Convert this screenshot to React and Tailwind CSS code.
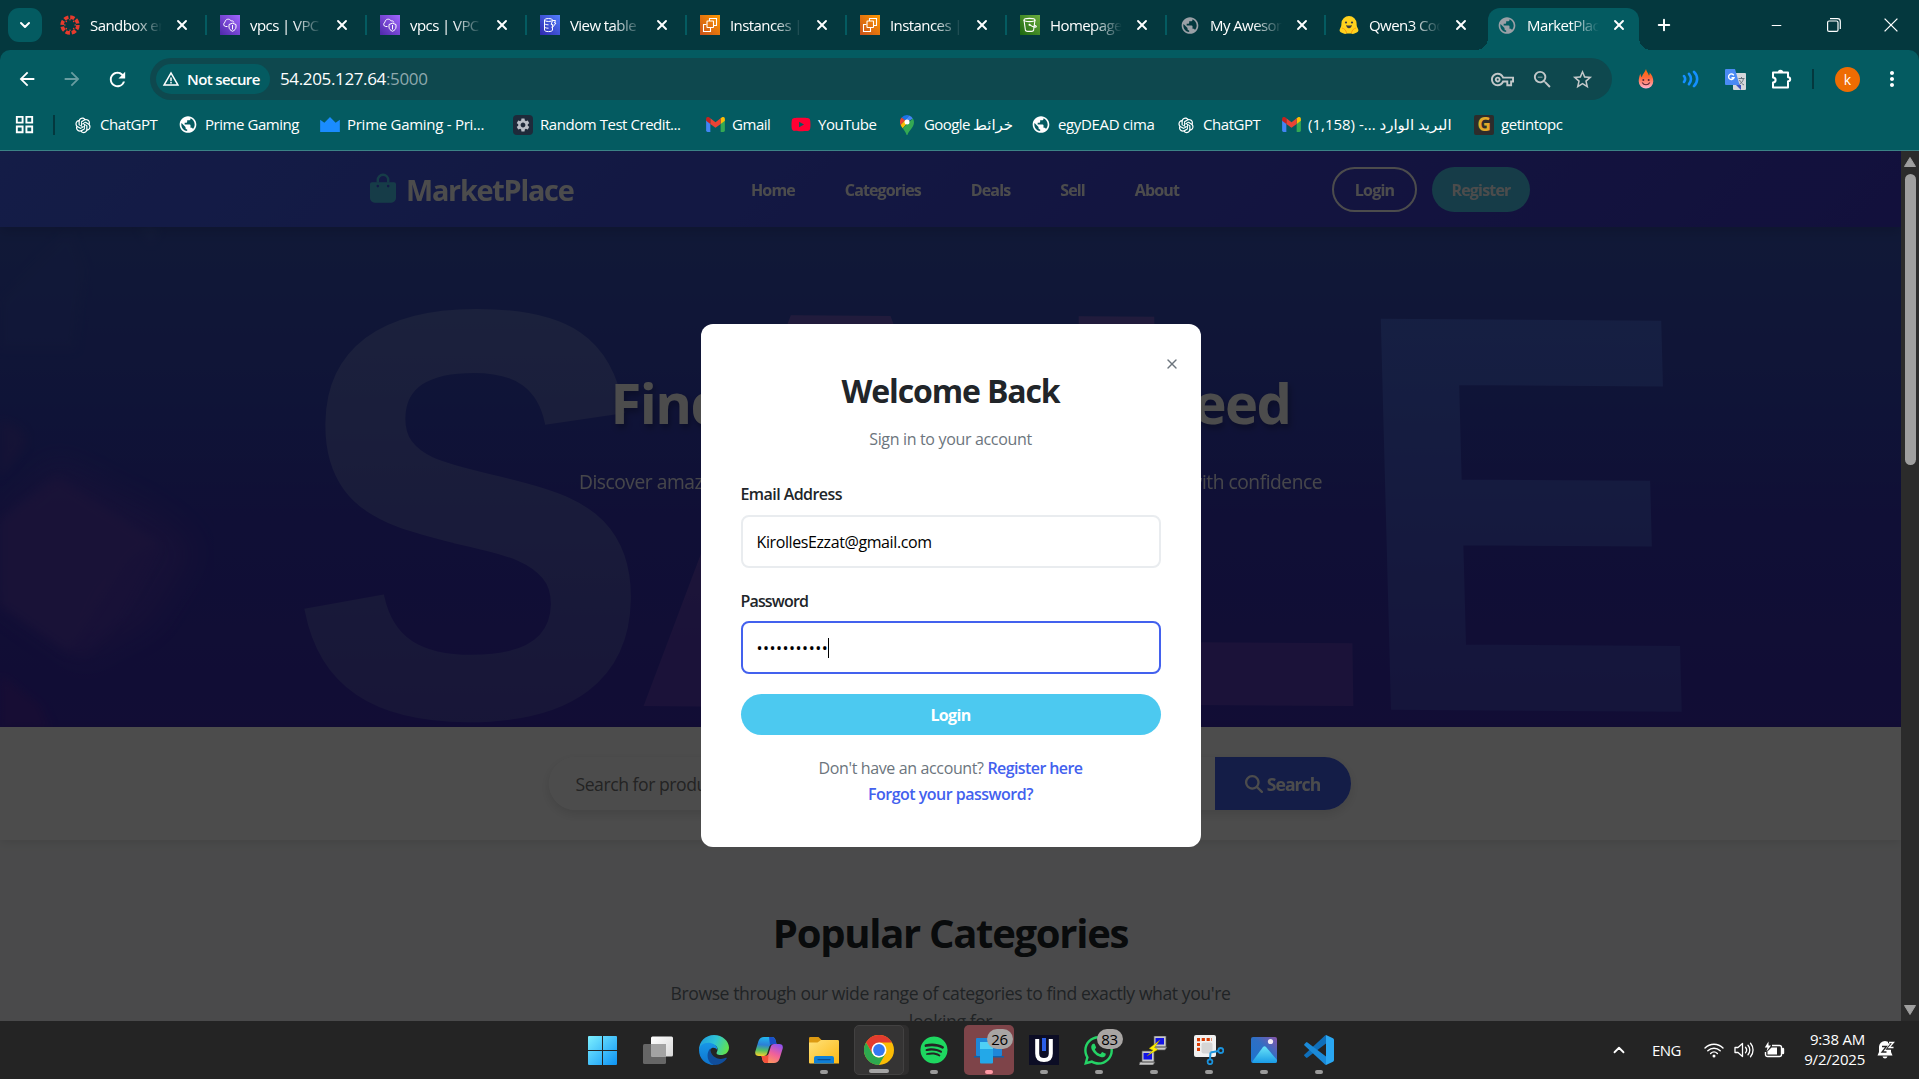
import { X, Plus, ChevronDown, ChevronUp, Minus } from "lucide-react";
import {
  MdPublic, MdArrowBack, MdArrowForward, MdRefresh, MdWarningAmber, MdOutlineVpnKey,
  MdZoomOut, MdStarBorder, MdMoreVert, MdOutlineGridView, MdSettings,
} from "react-icons/md";
import { FaSpotify, FaWhatsapp, FaYoutube } from "react-icons/fa";
import { FaMagnifyingGlass } from "react-icons/fa6";
import { AiOutlineOpenAI } from "react-icons/ai";

/* ---------- favicons ---------- */

function CanvasIcon() {
  return (
    <svg viewBox="0 0 20 20" className="size-5">
      <circle cx="10" cy="10" r="7.9" fill="none" stroke="#e83b2d" strokeWidth="3.6" strokeDasharray="4.4 1.8" />
      {[0, 45, 90, 135, 180, 225, 270, 315].map((a) => (
        <circle key={a} cx="10" cy="4.8" r="0.8" fill="#e83b2d" transform={`rotate(${a} 10 10)`} />
      ))}
    </svg>
  );
}

function VpcIcon() {
  return (
    <svg viewBox="0 0 20 20" className="size-5">
      <defs>
        <linearGradient id="vpc" x1="0" y1="1" x2="1" y2="0">
          <stop offset="0" stopColor="#4d27a8" />
          <stop offset="1" stopColor="#a166ff" />
        </linearGradient>
      </defs>
      <rect width="20" height="20" fill="url(#vpc)" />
      <path d="M7.500 11.500H5.800A2.200 2.200 0 0 1 5 7.300C5 4 9.500 3 11.300 6c1.300-.5 2.400.3 2.500 1.500" fill="none" stroke="#fff" strokeWidth="1" />
      <path d="M9 9.500l3.500-1.300L16 9.500v2.500c0 2-1.500 3.400-3.500 4.300C10.500 15.400 9 14 9 12z M12.500 10v4.500" fill="none" stroke="#fff" strokeWidth="1" />
    </svg>
  );
}

function DynamoIcon() {
  return (
    <svg viewBox="0 0 20 20" className="size-5">
      <defs>
        <linearGradient id="ddb" x1="0" y1="1" x2="1" y2="0">
          <stop offset="0" stopColor="#2e27ad" />
          <stop offset="1" stopColor="#527fff" />
        </linearGradient>
      </defs>
      <rect width="20" height="20" fill="url(#ddb)" />
      <g fill="none" stroke="#fff" strokeWidth="1">
        <ellipse cx="8.500" cy="5" rx="4" ry="1.500" />
        <path d="M4.500 5v10c0 1 1.800 1.600 4 1.600s4-.6 4-1.600v-2M4.500 8.300c0 1 1.800 1.500 4 1.500M4.500 11.700c0 1 1.800 1.500 4 1.500" />
        <path d="M12.500 5.500h3l-1 2.500h1.500l-4 5 .8-3.500h-1.600z" />
      </g>
    </svg>
  );
}

function Ec2Icon() {
  return (
    <svg viewBox="0 0 20 20" className="size-5">
      <defs>
        <linearGradient id="ec2" x1="0" y1="1" x2="1" y2="0">
          <stop offset="0" stopColor="#c8511b" />
          <stop offset="1" stopColor="#ff9900" />
        </linearGradient>
      </defs>
      <rect width="20" height="20" fill="url(#ec2)" />
      <g fill="none" stroke="#fff" strokeWidth="1.100">
        <rect x="7" y="6" width="6.500" height="6.500" rx="0.500" />
        <path d="M9.500 6V3.500H16.500V10.500H13.500" />
        <path d="M6.500 9.500H3.500V16.500H10.500V13" />
      </g>
    </svg>
  );
}

function S3Icon() {
  return (
    <svg viewBox="0 0 20 20" className="size-5">
      <defs>
        <linearGradient id="s3" x1="0" y1="1" x2="1" y2="0">
          <stop offset="0" stopColor="#1b660f" />
          <stop offset="1" stopColor="#6cae3e" />
        </linearGradient>
      </defs>
      <rect width="20" height="20" fill="url(#s3)" />
      <g fill="none" stroke="#fff" strokeWidth="1.100">
        <ellipse cx="9.500" cy="5" rx="5.500" ry="1.600" />
        <path d="M4 5l1.400 10.200c.6 1.600 7.600 1.600 8.200 0L15 5" />
        <path d="M9.500 9.800c2 1.400 5 2.600 6.500 2.200 1-.6-.6-1.600-2-2" />
      </g>
      <circle cx="9.500" cy="9.800" r="1" fill="#fff" />
    </svg>
  );
}

function HuggingIcon() {
  return (
    <svg viewBox="0 0 20 20" className="size-5">
      <path d="M10 1a7.600 7.600 0 0 1 7.600 7.600c0 2 .2 3.400 1.600 5.600.8 1.600-.6 3-2 3.600-2 1.200-3.800 1.400-5 .6h-4.400c-1.200.8-3 .6-5-.6-1.400-.6-2.800-2-2-3.600 1.400-2.200 1.600-3.600 1.600-5.600A7.600 7.600 0 0 1 10 1z" fill="#ffd21e" />
      <path d="M3 13c2 .4 4 2 4.600 5M17 13c-2 .4-4 2-4.600 5" stroke="#ff9d0b" strokeWidth="1" fill="none" />
      <circle cx="7" cy="7.500" r="1.100" fill="#3a3b45" />
      <circle cx="13" cy="7.500" r="1.100" fill="#3a3b45" />
      <path d="M7.200 10c1.400.8 4.200.8 5.600 0 0 2-1.200 3.200-2.800 3.200S7.200 12 7.200 10z" fill="#3a3b45" />
    </svg>
  );
}

function GmailIcon() {
  return (
    <svg viewBox="0 0 20 16" className="h-[15px] w-[19px]">
      <path d="M0 2.500V14.500A1.500 1.500 0 0 0 1.500 16H4.500V7z" fill="#4285f4" />
      <path d="M20 2.500V14.500A1.500 1.500 0 0 1 18.500 16H15.500V7z" fill="#34a853" />
      <path d="M15.500 1.500V7.500L20 4V2c0-2-2.200-2.600-3.500-1.500z" fill="#fbbc04" />
      <path d="M4.500 7.500V1.300L10 5.500l5.500-4.200V7.500L10 11.500z" fill="#ea4335" />
      <path d="M0 2v2l4.500 3.500V1.300L3.500.5C2.200-.6 0 0 0 2z" fill="#c5221f" />
    </svg>
  );
}

function MapsIcon() {
  return (
    <svg viewBox="0 0 14 20" className="h-[20px] w-[14px]">
      <path d="M7 0a7 7 0 0 0-5.400 2.500L5 5.400 9.200.4A7 7 0 0 0 7 0z" fill="#1a73e8" />
      <path d="M9.200.4L4.900 5.500 7 7l5.900-3.600A7 7 0 0 0 9.200.4z" fill="#4285f4" />
      <path d="M1.600 2.500A7 7 0 0 0 .6 10l4.500-4.700z" fill="#ea4335" />
      <path d="M.6 10c.5 1.200 1.300 2.200 2.100 3.300L9.600 5.500 5 5.300z" fill="#fbbc04" />
      <path d="M12.900 3.400L2.700 13.300C4.200 15.500 5.500 17 6.400 19.400c.2.800 1 .8 1.200 0C9 15.500 14 12.500 14 7a7 7 0 0 0-1.100-3.600z" fill="#34a853" />
      <circle cx="7" cy="7" r="2.500" fill="#fff" />
    </svg>
  );
}

function CrownIcon() {
  return (
    <svg viewBox="0 0 21 16" className="h-[15px] w-[21px]">
      <path d="M0 3l4.500 3L10.500 0l6 6L21 3v13H0z" fill="#1a8cff" />
    </svg>
  );
}

function RandomIcon() {
  return (
    <span className="flex size-5 items-center justify-center rounded bg-[#1e2a3a]">
      <MdSettings className="size-4 text-[#b9bec6]" />
    </span>
  );
}

function GetIntoPcIcon() {
  return (
    <span className="flex size-5 items-center justify-center rounded-[2px] bg-[#2d2c2b] text-[19px] leading-none font-bold text-[#e2a92a]">
      G
    </span>
  );
}

/* ---------- browser frame ---------- */

const globe = <MdPublic className="size-[21px] text-[#9aa0a6]" />;

const tabs = [
  { icon: <CanvasIcon />, title: "Sandbox en", w: "w-[160px]" },
  { icon: <VpcIcon />, title: "vpcs | VPC", w: "w-[160px]" },
  { icon: <VpcIcon />, title: "vpcs | VPC", w: "w-[160px]" },
  { icon: <DynamoIcon />, title: "View table", w: "w-[160px]" },
  { icon: <Ec2Icon />, title: "Instances |", w: "w-[160px]" },
  { icon: <Ec2Icon />, title: "Instances |", w: "w-[160px]" },
  { icon: <S3Icon />, title: "Homepage", w: "w-[160px]" },
  { icon: globe, title: "My Awesom", w: "w-[159px]" },
];

function TabBody({ icon, title }) {
  return (
    <>
      <span className="flex size-5 shrink-0 items-center justify-center">{icon}</span>
      <span className="ml-[10px] w-[72px] shrink-0 overflow-hidden text-[15px] tracking-[-0.038em] whitespace-nowrap text-white mask-r-from-60%">
        {title}
      </span>
      <X className="ml-[12px] size-4 shrink-0 text-white" strokeWidth={2.8} />
    </>
  );
}

function TabStrip() {
  return (
    <div className="flex h-[50px] items-stretch">
      <button className="mt-2 ml-2 flex size-[34px] items-center justify-center rounded-[11px] bg-[#045b61]">
        <ChevronDown className="size-4 text-white" strokeWidth={3} />
      </button>
      <div className="ml-[5px] flex">
        {tabs.map((t, i) => (
          <div key={i} className={`flex items-center pl-[13px] ${t.w}`}>
            <TabBody {...t} />
            <span className="ml-auto h-5 w-[2px] shrink-0 bg-[#045b61]" />
          </div>
        ))}
        <div className="flex w-[162px] items-center pl-[13px]">
          <TabBody icon={<HuggingIcon />} title="Qwen3 Cod" />
        </div>
      </div>
      <div className="relative mt-2 flex w-[151px] items-center rounded-t-[12px] bg-[#045b61] pb-2 pl-[9px]">
        <span className="absolute bottom-0 -left-3 size-3 bg-[radial-gradient(circle_at_0_0,transparent_12px,#045b61_12px)]" />
        <span className="absolute -right-3 bottom-0 size-3 bg-[radial-gradient(circle_at_100%_0,transparent_12px,#045b61_12px)]" />
        <TabBody icon={globe} title="MarketPlace" />
      </div>
      <Plus className="mt-[16px] ml-[16px] size-[18px] text-white" strokeWidth={2.6} />
      <div className="ml-auto flex items-center gap-[43px] pr-[21px] text-white">
        <Minus className="size-[15px]" strokeWidth={1.7} />
        <svg viewBox="0 0 14 14" className="size-[14px]" fill="none" stroke="currentColor" strokeWidth="1.200">
          <rect x="0.600" y="3" width="10.400" height="10.400" rx="1.500" />
          <path d="M3 .7h7.500a2.800 2.800 0 0 1 2.800 2.800V11" />
        </svg>
        <svg viewBox="0 0 14 14" className="size-[14px]" stroke="currentColor" strokeWidth="1.300">
          <path d="M.6.600l12.800 12.800M13.400.6L.6 13.400" />
        </svg>
      </div>
    </div>
  );
}

function FlameIcon() {
  return (
    <svg viewBox="0 0 16 20" className="h-[20px] w-[16px]">
      <defs>
        <linearGradient id="flame" x1="0" y1="0" x2="0" y2="1">
          <stop offset="0" stopColor="#ff6a00" />
          <stop offset="0.450" stopColor="#ff6a3c" />
          <stop offset="1" stopColor="#ffb3d1" />
        </linearGradient>
      </defs>
      <path d="M8 0c.4 2.500 2.200 3.800 3 6.800.6-1 .8-2 .6-3.300C14 6 15.300 9 15.300 12.300a7.300 7.300 0 0 1-14.600 0C.7 9.800 1.500 7 2.400 4.600c.2 1.700.6 2.900 1.400 3.600C4.400 5 7 3.500 8 0z" fill="url(#flame)" />
      <circle cx="5.300" cy="11" r="1" fill="#5b2434" />
      <circle cx="10.700" cy="11" r="1" fill="#5b2434" />
      <path d="M4.200 13.500c1.800 3 5.800 3 7.600 0" fill="none" stroke="#5b2434" strokeWidth="1.100" />
    </svg>
  );
}

function WavesIcon() {
  return (
    <svg viewBox="0 0 18 18" className="size-[18px]" fill="none" stroke="#1490ff" strokeWidth="2.600" strokeLinecap="round">
      <path d="M2 6c1.500 2 1.500 4 0 6M7 3.800c2.600 3 2.600 7.400 0 10.400M12 1.800c4.200 4.200 4.200 10.200 0 14.400" />
    </svg>
  );
}

function TranslateIcon() {
  return (
    <svg viewBox="0 0 21 21" className="size-[21px]">
      <rect x="8" y="4" width="13" height="17" rx="1" fill="#d5d8dc" />
      <path d="M11 16l5 5 0-5z" fill="#3a53c5" />
      <path d="M1 0h9l4.500 16H1a1 1 0 0 1-1-1V1a1 1 0 0 1 1-1z" fill="#4a8af4" />
      <path d="M8.800 6.300A2.800 2.800 0 1 0 9 8.700H6.500" fill="none" stroke="#fff" strokeWidth="1.400" />
      <path d="M13.500 9.500h6M16.500 8v1.500M18.500 9.500c-.6 3-2.500 5-4.300 6M14.500 11c1 2 2.500 4 4.500 5" fill="none" stroke="#66757f" strokeWidth="1" />
    </svg>
  );
}

function PuzzleIcon() {
  return (
    <svg viewBox="0 0 22 22" className="size-[22px]">
      <path
        d="M3 4.500h15v4.800c1.600 0 2.200.8 2.200 2s-.6 2-2.200 2v6.200H3v-5c1.800-.2 2.600-1.200 2.600-2.500S4.800 9.700 3 9.500z"
        fill="none" stroke="#fff" strokeWidth="2" strokeLinejoin="round"
      />
      <path d="M7.800 4.500a2.700 2.700 0 0 1 5.400 0z" fill="#fff" />
    </svg>
  );
}

function Toolbar() {
  return (
    <div className="flex h-[58px] items-center text-white">
      <MdArrowBack className="ml-[16px] size-[22px]" />
      <MdArrowForward className="ml-[23px] size-[22px] opacity-40" />
      <MdRefresh className="ml-[23px] size-[23px]" />
      <div className="ml-[21px] flex h-[42px] w-[1462px] shrink-0 items-center rounded-full bg-[#0e484e] pr-[10px] pl-[6px]">
        <span className="flex h-[30px] w-[114px] items-center rounded-full bg-[#045b61] pl-[6px]">
          <MdWarningAmber className="size-[18px]" />
          <span className="ml-[7px] text-[15px] font-semibold tracking-[-0.04em] whitespace-nowrap">Not secure</span>
        </span>
        <span className="ml-[10px] text-[17px] tracking-[-0.021em]">
          54.205.127.64<span className="text-[#8fa9ad]">:5000</span>
        </span>
        <span className="ml-auto flex text-[#c3c8c9]">
          <span className="flex w-10 justify-center"><MdOutlineVpnKey className="size-[23px]" /></span>
          <span className="flex w-10 justify-center"><MdZoomOut className="size-[23px]" /></span>
          <span className="flex w-10 justify-center"><MdStarBorder className="size-[23px]" /></span>
        </span>
      </div>
      <div className="ml-[11px] flex">
        <span className="flex w-[45px] items-center justify-center"><FlameIcon /></span>
        <span className="flex w-[45px] items-center justify-center"><WavesIcon /></span>
        <span className="flex w-[45px] items-center justify-center"><TranslateIcon /></span>
        <span className="flex w-[45px] items-center justify-center"><PuzzleIcon /></span>
      </div>
      <span className="ml-[9px] h-5 w-[2px] bg-[#04383e]" />
      <span className="ml-[21px] flex size-[25px] items-center justify-center rounded-full bg-[#ee6c02] text-[14px]">k</span>
      <MdMoreVert className="ml-[20px] size-6" />
    </div>
  );
}

const openai = <AiOutlineOpenAI className="size-5" />;

const bookmarks = [
  { icon: openai, label: "ChatGPT", w: "w-[105px]" },
  { icon: <MdPublic className="size-[21px]" />, label: "Prime Gaming", w: "w-[142px]" },
  { icon: <CrownIcon />, label: "Prime Gaming - Pri...", w: "w-[193px] tracking-[-0.018em]" },
  { icon: <RandomIcon />, label: "Random Test Credit...", w: "w-[192px]" },
  { icon: <GmailIcon />, label: "Gmail", w: "w-[86px]" },
  { icon: <FaYoutube className="size-[21px] text-[#ff0033]" />, label: "YouTube", w: "w-[106px]" },
  { icon: <MapsIcon />, label: "Google خرائط", w: "w-[134px] tracking-[-0.04em]" },
  { icon: <MdPublic className="size-[21px]" />, label: "egyDEAD cima", w: "w-[145px] tracking-[-0.024em]" },
  { icon: openai, label: "ChatGPT", w: "w-[105px]" },
  { icon: <GmailIcon />, label: "(1,158) -... البريد الوارد", w: "w-[193px] tracking-[-0.04em]" },
  { icon: <GetIntoPcIcon />, label: "getintopc", w: "w-[100px]" },
];

function BookmarksBar() {
  return (
    <div className="flex h-[33px] items-center text-[15px] tracking-[-0.03em] text-white">
      <MdOutlineGridView className="ml-[13px] size-[23px]" />
      <span className="ml-[17px] h-5 w-[2px] bg-[#04383e]" />
      <div className="ml-[18px] flex">
        {bookmarks.map((b, i) => (
          <div key={i} className={`flex shrink-0 items-center ${b.w}`}>
            <span className="flex w-5 shrink-0 items-center justify-center">{b.icon}</span>
            <span className="ml-[7px] whitespace-nowrap">{b.label}</span>
          </div>
        ))}
      </div>
    </div>
  );
}

/* ---------- marketplace page ---------- */

function BagIcon() {
  return (
    <svg viewBox="0 0 26 30" className="h-[30px] w-[26px] shrink-0 text-[#4cc9f0]">
      <path d="M7.800 9.500V7a5.200 5.200 0 0 1 10.400 0v2.500" fill="none" stroke="currentColor" strokeWidth="2.400" />
      <path
        fillRule="evenodd"
        fill="currentColor"
        d="M2 9.300H24Q26 9.300 26 11.300V25a4.700 4.700 0 0 1-4.700 4.700H4.700A4.700 4.700 0 0 1 0 25V11.300Q0 9.300 2 9.300zM7.800 11.800a1.300 1.300 0 1 0 0 2.600 1.300 1.300 0 0 0 0-2.600zM18.200 11.800a1.300 1.300 0 1 0 0 2.600 1.300 1.300 0 0 0 0-2.600z"
      />
    </svg>
  );
}

function SiteHeader() {
  return (
    <header className="relative z-10 flex h-[76px] shrink-0 justify-center bg-[linear-gradient(135deg,#4361ee,#3f37c9)] pr-[1px] text-white shadow-[0_4px_12px_rgba(0,0,0,0.15)]">
      <div className="flex w-[1160px] items-center">
        <div className="flex w-[203px] items-center text-[28.8px] font-bold tracking-[-0.043em]">
          <span className="mb-[3px]"><BagIcon /></span>
          <span className="mt-[2px] ml-[10px]">MarketPlace</span>
        </div>
        <nav className="ml-[178px] flex w-[428px] justify-between pt-px text-base font-bold tracking-[-0.055em]">
          <a>Home</a>
          <a>Categories</a>
          <a>Deals</a>
          <a>Sell</a>
          <a>About</a>
        </nav>
        <div className="ml-auto flex gap-[15px] text-base font-bold tracking-[-0.05em]">
          <span className="flex h-[45px] w-[85px] items-center justify-center rounded-full border-2 border-white pt-px">Login</span>
          <span className="flex h-[45px] w-[98px] items-center justify-center rounded-full bg-[#4cc9f0] pt-px">Register</span>
        </div>
      </div>
    </header>
  );
}

function HeroArt() {
  return (
    <svg viewBox="0 227 1901 500" className="absolute inset-0 size-full" preserveAspectRatio="none">
      <defs>
        <linearGradient id="lightInk" x1="0" y1="0" x2="0" y2="1">
          <stop offset="0.150" stopColor="#5c71cb" />
          <stop offset="0.850" stopColor="#4f48ba" />
        </linearGradient>
        <linearGradient id="pinkInk" x1="0" y1="0" x2="0" y2="1">
          <stop offset="0.150" stopColor="#735fca" />
          <stop offset="0.700" stopColor="#5b3fbe" />
        </linearGradient>
        <linearGradient id="blueInk" x1="0" y1="0" x2="0" y2="1">
          <stop offset="0.150" stopColor="#4a6ce0" />
          <stop offset="0.850" stopColor="#4644c4" />
        </linearGradient>
        <filter id="soft"><feGaussianBlur stdDeviation="5" /></filter>
        <filter id="softer"><feGaussianBlur stdDeviation="14" /></filter>
      </defs>
      <g filter="url(#softer)">
        <path d="M57 462L150 510Q190 535 194 555L150 625 84 660 0 600V515z" fill="#5d40ba" opacity="0.550" />
      </g>
      <g filter="url(#soft)">
        <path d="M57 478L0 520V605L68 652 115 580Q130 550 160 545z" fill="#5d40ba" opacity="0.650" />
        <path d="M68 652L100 590Q130 550 160 548L120 620 86 656z" fill="#5d40ba" opacity="0.350" />
        <path d="M0 674L40 705 50 730H0z" fill="#5b2fae" opacity="0.600" />
        <path d="M0 420Q34 430 22 450L0 478z" fill="#573fb4" opacity="0.500" />
        <path d="M70 227L85 270 75 350 0 350V300z" fill="#4262c8" opacity="0.200" />
        <path d="M140 227H158L151 243z" fill="#4a67c8" opacity="0.500" />
      </g>
      <g fontFamily="Liberation Sans" fontWeight="700" fontSize="564">
        <text transform="translate(290 714) skewX(-1) scale(0.950 1.022)" fill="url(#lightInk)" stroke="url(#lightInk)" strokeWidth="5">S</text>
        <text transform="translate(629 706) skewY(0.400) scale(1.040 1.010)" fill="url(#pinkInk)">A</text>
        <text transform="translate(1049 704) skewX(0.800) skewY(0.400) scale(0.930 1)" fill="url(#pinkInk)">L</text>
        <text transform="translate(1358 708) skewX(1.500) skewY(0.400) scale(0.910 1)" fill="url(#blueInk)" stroke="url(#blueInk)" strokeWidth="3">E</text>
      </g>
    </svg>
  );
}

function Hero() {
  return (
    <section className="relative h-[500px] shrink-0 overflow-hidden bg-[linear-gradient(180deg,#3953b8_0%,#3543b8_35%,#3633b4_60%,#3c2cb2_100%)] text-white">
      <HeroArt />
      <div className="relative flex flex-col items-center">
        <h1 className="mt-[142px] text-[56px] leading-[67px] font-bold tracking-[-0.028em] whitespace-nowrap [text-shadow:2px_4px_6px_rgba(0,0,0,0.3)]">
          Find Everything You Need
        </h1>
        <p className="mt-[29px] flex w-[743px] justify-between text-[19.2px] leading-[33px] tracking-[-0.024em] opacity-90">
          <span>Discover amazing</span>
          <span>with confidence</span>
        </p>
      </div>
    </section>
  );
}

function SearchSection() {
  return (
    <section className="relative flex h-[113px] shrink-0 justify-center bg-white pt-[30px] pr-[2px] shadow-[0_2px_10px_rgba(0,0,0,0.1)]">
      <div className="flex h-[53px] w-[802px] overflow-hidden rounded-full shadow-[0_4px_12px_rgba(0,0,0,0.12)]">
        <span className="flex flex-1 items-center bg-white pt-px pl-[27px] text-[17.6px] tracking-[-0.026em] text-[#757575]">
          Search for products...
        </span>
        <span className="flex w-[136px] items-center justify-center gap-[4px] bg-[#4361ee] text-[17.6px] font-bold tracking-[-0.055em] text-white">
          <FaMagnifyingGlass className="size-[18px]" />
          <span className="pt-px">Search</span>
        </span>
      </div>
    </section>
  );
}

function CategoriesSection() {
  return (
    <section className="flex flex-1 flex-col items-center bg-[#f8f9fa] pt-[63px]">
      <h2 className="text-[40px] leading-[60px] font-bold tracking-[-0.032em] text-[#212529]">Popular Categories</h2>
      <p className="mt-[16px] w-[600px] text-center text-[17.6px] leading-[28px] tracking-[-0.024em] text-[#6c757d]">
        Browse through our wide range of categories to find exactly what you're looking for
      </p>
    </section>
  );
}

function LoginModal() {
  return (
    <div className="absolute inset-0 z-20 flex items-start justify-center bg-black/70 pt-[173px]">
      <div className="relative flex h-[523px] w-[500px] shrink-0 flex-col rounded-xl bg-white px-10 pt-[47px] text-base text-[#212529]">
        <X className="absolute top-[32px] right-[21px] size-4 text-[#6c757d]" strokeWidth={2} />
        <h2 className="text-center text-[32px] leading-[40px] font-bold tracking-[-0.035em]">Welcome Back</h2>
        <p className="mt-4 text-center leading-6 tracking-[-0.021em] text-[#6c757d]">Sign in to your account</p>
        <label className="mt-[31px] leading-6 font-semibold tracking-[-0.035em]">Email Address</label>
        <div className="mt-[9px] flex h-[53px] items-center rounded-lg border-2 border-[#e9ecef] px-[14px] tracking-[-0.025em] text-black">
          KirollesEzzat@gmail.com
        </div>
        <label className="mt-[21px] leading-6 font-semibold tracking-[-0.053em]">Password</label>
        <div className="mt-2 flex h-[53px] items-center rounded-lg border-2 border-[#4361ee] px-[14px] text-black">
          <span className="tracking-[0.5px]">•••••••••••</span>
          <span className="h-5 w-px bg-black" />
        </div>
        <button className="mt-5 h-[41px] rounded-full bg-[#4cc9f0] pt-px font-bold tracking-[-0.04em] text-white">Login</button>
        <p className="mt-5 text-center leading-[26px] tracking-[-0.023em] text-[#6c757d]">
          Don't have an account?{" "}
          <a className="font-semibold tracking-[-0.037em] text-[#4361ee]">Register here</a>
        </p>
        <a className="text-center leading-[26px] font-semibold tracking-[-0.032em] text-[#4361ee]">Forgot your password?</a>
      </div>
    </div>
  );
}

function Scrollbar() {
  return (
    <div className="flex w-[18px] flex-col items-center bg-[#2b2b2b] py-[6px]">
      <svg viewBox="0 0 12 10" className="h-[10px] w-[12px]"><path d="M6 .5L11.500 9.500H.5z" fill="#9f9f9f" stroke="#9f9f9f" strokeLinejoin="round" /></svg>
      <div className="mt-[7px] h-[291px] w-[11px] rounded-full bg-[#9f9f9f]" />
      <svg viewBox="0 0 12 10" className="mt-auto h-[10px] w-[12px]"><path d="M6 9.500L11.500.5H.5z" fill="#9f9f9f" stroke="#9f9f9f" strokeLinejoin="round" /></svg>
    </div>
  );
}

/* ---------- taskbar ---------- */

function WindowsIcon() {
  return (
    <svg viewBox="0 0 29 29" className="size-[29px]">
      <defs>
        <linearGradient id="win" gradientUnits="userSpaceOnUse" x1="0" y1="0" x2="29" y2="29">
          <stop offset="0" stopColor="#7df0ff" />
          <stop offset="1" stopColor="#0d93f5" />
        </linearGradient>
      </defs>
      <path d="M0 1Q0 0 1 0H14V14H0zM15 0H28Q29 0 29 1V14H15zM0 15H14V29H1Q0 29 0 28zM15 15H29V28Q29 29 28 29H15z" fill="url(#win)" />
    </svg>
  );
}

function TaskViewIcon() {
  return (
    <svg viewBox="0 0 30 28" className="h-[28px] w-[30px]">
      <defs>
        <linearGradient id="tv" x1="0" y1="0" x2="1" y2="1">
          <stop offset="0" stopColor="#fff" />
          <stop offset="1" stopColor="#d8d8d8" />
        </linearGradient>
      </defs>
      <rect x="0" y="8" width="23" height="20" rx="1.500" fill="#666" />
      <rect x="8" y="0.500" width="22" height="20" rx="1.500" fill="url(#tv)" />
      <rect x="8" y="8" width="15" height="12.500" fill="#a3a3a3" />
    </svg>
  );
}

function EdgeIcon() {
  return (
    <svg viewBox="0 0 30 30" className="size-[30px]">
      <defs>
        <linearGradient id="edgeTop" x1="0" y1="0.300" x2="1" y2="0.600">
          <stop offset="0" stopColor="#1f9de0" />
          <stop offset="0.500" stopColor="#2fc4d4" />
          <stop offset="1" stopColor="#62e24c" />
        </linearGradient>
        <linearGradient id="edgeLeft" x1="0" y1="0" x2="0" y2="1">
          <stop offset="0" stopColor="#1796e8" />
          <stop offset="1" stopColor="#0f74cd" />
        </linearGradient>
      </defs>
      <path d="M0 15C0 6.500 6.500 0 15 0s15 6.200 15 12.500c0 5-3.800 7.500-8.200 7.500-3.300 0-5-1.200-4-2.800 2.200-3.600 0-7.700-5.300-7.700C6 9.500 1 12 0 15z" fill="url(#edgeTop)" />
      <path d="M0 15c.5-4.500 5-8 11.500-7 4.500.8 7.300 3.500 6.700 7-1-1.800-3-2.500-4.700-2.200-5 2-5.500 11 1.500 17.200C6.500 30 0 23.500 0 15z" fill="url(#edgeLeft)" />
      <path d="M11.300 13.500C6 19 9 29.500 16 30c5 0 9.500-3 11.700-6.500.4-.8-.2-1-.9-.7C20 26 11.500 22 11.300 13.500z" fill="#104e9c" />
    </svg>
  );
}

function CopilotIcon() {
  return (
    <svg viewBox="0 0 28 26" className="h-[26px] w-[28px]">
      <defs>
        <linearGradient id="copL" x1="0.300" y1="0" x2="0.200" y2="1">
          <stop offset="0" stopColor="#22b5ee" />
          <stop offset="0.400" stopColor="#2c7fd8" />
          <stop offset="0.700" stopColor="#55c060" />
          <stop offset="1" stopColor="#ffd02a" />
        </linearGradient>
        <linearGradient id="copR" x1="0.800" y1="0" x2="0.300" y2="1">
          <stop offset="0" stopColor="#8f52f0" />
          <stop offset="0.500" stopColor="#f0609a" />
          <stop offset="1" stopColor="#ff9a5a" />
        </linearGradient>
      </defs>
      <path d="M9 0H17Q19.500 0 20.500 3L21.500 7H17.500Q15 7 14.300 9.500L12 17Q11 19 9 19H4Q-.5 19 .3 14.500L3.500 4Q5 0 9 0z" fill="url(#copL)" />
      <path d="M14 0H17Q19.500 0 20.500 3L21.500 7H17.500Q15.500 7 15 8z" fill="#1a4fc8" />
      <path d="M19 26H11Q8.500 26 7.500 23L6.500 19H10.500Q13 19 13.700 16.500L16 9Q17 7 19 7H24Q28.500 7 27.700 11.500L24.500 22Q23 26 19 26z" fill="url(#copR)" />
      <path d="M11 26Q8.500 26 7.500 23L6.500 19H10.500Q12.500 19 13.500 17L13 26z" fill="#f5513c" />
    </svg>
  );
}

function ExplorerIcon() {
  return (
    <svg viewBox="0 0 30 27" className="h-[27px] w-[30px]">
      <defs>
        <linearGradient id="fold" x1="0" y1="0" x2="1" y2="1">
          <stop offset="0" stopColor="#ffe27a" />
          <stop offset="1" stopColor="#fdb813" />
        </linearGradient>
      </defs>
      <path d="M0 1.200Q0 0 1.200 0H9.500L13 3.500V9H0z" fill="#dd9a12" />
      <path d="M0 5.500H8.500L12 3H28.800Q30 3 30 4.200V26.500H1Q0 26.500 0 25.500z" fill="url(#fold)" />
      <path d="M5 26.500V21Q5 19 7 19H23Q25 19 25 21V26.500z" fill="#0f7fd6" />
      <path d="M9 22.700H21" stroke="#0a4e92" strokeWidth="1.200" strokeLinecap="round" />
    </svg>
  );
}

function ChromeIcon() {
  return (
    <svg viewBox="0 0 30 30" className="size-[30px]">
      <circle cx="15" cy="15" r="15" fill="#fbbc05" />
      <path d="M2 7.500A15 15 0 0 1 28 7.500H15L8.500 18.700z" fill="#e33b2e" />
      <path d="M2 7.500L8.500 18.750Q11 22.500 15 22.500L21.500 18.750 15 30A15 15 0 0 1 2 7.500z" fill="#2da94f" />
      <circle cx="15" cy="15" r="7.500" fill="#fff" />
      <circle cx="15" cy="15" r="5.900" fill="#3478f0" />
    </svg>
  );
}

function PhoneLinkIcon() {
  return (
    <svg viewBox="0 0 30 27" className="h-[27px] w-[30px]">
      <rect x="2" y="1" width="26" height="18" rx="1" fill="#1e86d8" />
      <path d="M0 19H30V20.500H0z" fill="#0f62ad" />
      <path d="M6 5H19V16H6z" fill="#4fd0f5" />
      <path d="M6 12H19V25.500Q19 26.500 18 26.500H7Q6 26.500 6 25.500z" fill="#23a8e8" />
    </svg>
  );
}

function UIcon() {
  return (
    <svg viewBox="0 0 30 30" className="size-[30px]">
      <rect width="30" height="30" fill="#0c0d25" />
      <path d="M8.200 4V18.500Q8.200 25 15 25T21.800 18.500V4" fill="none" stroke="#fff" strokeWidth="4" />
      <rect x="13" y="3" width="4" height="13" fill="#2b5fe8" />
    </svg>
  );
}

function PuttyIcon() {
  return (
    <svg viewBox="0 0 29 29" className="size-[29px]">
      <g>
        <path d="M15 0H27V11H15zM13 11H28L26 14H12z" fill="#c9c9c9" stroke="#555" strokeWidth="0.700" />
        <rect x="16.500" y="2" width="8.500" height="6.500" fill="#1212e6" />
        <path d="M3 15H15V26H3zM1 26H16L14 29H0z" fill="#c9c9c9" stroke="#555" strokeWidth="0.700" />
        <rect x="4.500" y="17" width="8.500" height="6.500" fill="#1212e6" />
      </g>
      <path d="M21 4L10 12.500 14 14 8 20 19 13.500 15.500 11.500z" fill="#ffee00" stroke="#8a8000" strokeWidth="0.400" />
    </svg>
  );
}

function SnipIcon() {
  return (
    <svg viewBox="0 0 30 30" className="size-[30px]">
      <rect width="22" height="22" rx="2" fill="#f1f1f1" />
      <rect x="7.500" y="7.500" width="11" height="11" rx="2" fill="#d5d5d5" />
      <path d="M4.500 16V4.500H18" fill="none" stroke="#d83b01" strokeWidth="3" strokeDasharray="3.200 1.700" />
      <path d="M16.500 17.500l8-1.500M16.500 17.500L16 24" stroke="#1b93dc" strokeWidth="2" />
      <circle cx="26.800" cy="15.500" r="2.500" fill="none" stroke="#1b93dc" strokeWidth="1.800" />
      <circle cx="16" cy="26.800" r="2.400" fill="none" stroke="#1b93dc" strokeWidth="1.800" />
    </svg>
  );
}

function PhotosIcon() {
  return (
    <svg viewBox="0 0 26 26" className="size-[26px]">
      <defs>
        <linearGradient id="ph" x1="0" y1="1" x2="1" y2="0">
          <stop offset="0" stopColor="#1b74d0" />
          <stop offset="0.550" stopColor="#2f6fc4" />
          <stop offset="1" stopColor="#8a55a8" />
        </linearGradient>
        <linearGradient id="hill" x1="0" y1="0" x2="0" y2="1">
          <stop offset="0" stopColor="#6ae4f8" />
          <stop offset="1" stopColor="#1a9be6" />
        </linearGradient>
      </defs>
      <rect width="26" height="26" rx="2" fill="url(#ph)" />
      <path d="M1 25L12 10Q13.500 8.500 15 10L26 23V24Q26 26 24 26H2z" fill="url(#hill)" />
      <circle cx="19.500" cy="4.500" r="2.600" fill="#f3ecf5" />
    </svg>
  );
}

function VsCodeIcon() {
  return (
    <svg viewBox="0 0 30 30" className="size-[30px]">
      <path d="M22 0L29 3.300Q30 3.800 30 5V25Q30 26.200 29 26.700L22 30z" fill="#2aa7f2" />
      <path d="M22 0V8.500L3.500 22.600Q2.700 23.200 2 22.500L.5 21Q-.3 20.200.5 19.500L21 .5z" fill="#0f6fba" />
      <path d="M22 30V21.500L3.500 7.400Q2.700 6.800 2 7.500L.5 9Q-.3 9.800.5 10.500L21 29.500z" fill="#1b8ad8" />
    </svg>
  );
}

function Badge({ children }) {
  return (
    <span className="absolute top-[4px] right-px flex h-5 w-[26px] items-center justify-center rounded-full bg-[#a8a5a3] text-[15px] tracking-[-0.03em] text-black">
      {children}
    </span>
  );
}

const apps = [
  { icon: <WindowsIcon /> },
  { icon: <TaskViewIcon /> },
  { icon: <EdgeIcon /> },
  { icon: <CopilotIcon /> },
  { icon: <ExplorerIcon />, mark: "w-2 bg-[#9a9a9a]" },
  { icon: <ChromeIcon />, mark: "w-5 bg-[#a5a5a5]", cell: "bg-[#353434] border border-[#424141] shadow-[5px_0_0_#2f2e2e]" },
  { icon: <FaSpotify className="size-[28px] rounded-full text-[#1ed760]" />, mark: "w-2 bg-[#9a9a9a]" },
  { icon: <PhoneLinkIcon />, mark: "w-2 bg-[#ff99a4]", cell: "bg-[#7e4449]", badge: "26" },
  { icon: <UIcon />, mark: "w-2 bg-[#9a9a9a]" },
  { icon: <FaWhatsapp className="size-[33px] text-[#25d366]" />, mark: "w-2 bg-[#9a9a9a]", badge: "83" },
  { icon: <PuttyIcon />, mark: "w-2 bg-[#9a9a9a]" },
  { icon: <SnipIcon />, mark: "w-2 bg-[#9a9a9a]" },
  { icon: <PhotosIcon />, mark: "w-2 bg-[#9a9a9a]" },
  { icon: <VsCodeIcon />, mark: "w-2 bg-[#9a9a9a]" },
];

function Tray() {
  return (
    <div className="ml-auto flex items-center text-white">
      <ChevronUp className="size-[18px]" strokeWidth={2.4} />
      <span className="ml-[24px] w-[31px] text-[15px] tracking-[-0.034em]">ENG</span>
      <svg viewBox="0 0 20 16" className="ml-[21px] h-[16px] w-[20px]" fill="none" stroke="currentColor" strokeWidth="1.400" strokeLinecap="round">
        <path d="M1 6c5-5 13-5 18 0M3.800 8.800c3.500-3.400 8.900-3.400 12.400 0M6.600 11.500c2-1.900 4.800-1.900 6.800 0" />
        <circle cx="10" cy="14" r="1.500" fill="currentColor" stroke="none" />
      </svg>
      <svg viewBox="0 0 20 18" className="ml-[10px] h-[18px] w-[20px]" fill="none" stroke="currentColor" strokeWidth="1.300" strokeLinecap="round" strokeLinejoin="round">
        <path d="M1 6.500h3L8.500 2.500v13L4 11.500H1zM11.500 6.300c1.300 1.500 1.300 3.900 0 5.400M14 4.300c2.400 2.700 2.400 6.700 0 9.400M16.500 2.300c3.400 3.900 3.400 9.500 0 13.400" />
      </svg>
      <svg viewBox="0 0 21 18" className="ml-[10px] h-[18px] w-[21px]" fill="none" stroke="currentColor" strokeWidth="1.400">
        <path d="M8 4.500h7.500a2 2 0 0 1 2 2v7a2 2 0 0 1-2 2h-12a2 2 0 0 1-2-2V11" />
        <path d="M19 8v4" strokeWidth="2.400" strokeLinecap="round" />
        <path d="M7.500 6.500h5.500v7H3.500v-3z" fill="currentColor" stroke="none" />
        <path d="M4.500.5L.8 6.500h2.700L2.500 10.500 7 4.500H4.500z" fill="currentColor" stroke="none" />
      </svg>
      <div className="mb-[2px] ml-[18px] flex w-[62px] flex-col items-end text-[15px] leading-[20px] tracking-[-0.014em] whitespace-nowrap">
        <span>9:38 AM</span>
        <span>9/2/2025</span>
      </div>
      <svg viewBox="0 0 18 20" className="mr-[24px] ml-[12px] h-[20px] w-[18px]">
        <path d="M8 1a6 6 0 0 0-6 6v5L.5 15.500h15L14 12V7A6 6 0 0 0 8 1zM5.500 16.500a2.600 2.600 0 0 0 5 0z" fill="#fff" />
        <path d="M11 1.500h6L12 8h5" fill="none" stroke="#242424" strokeWidth="3.500" />
        <path d="M5 6.500h4.500L5 12h4.500" fill="none" stroke="#242424" strokeWidth="1.300" />
        <path d="M12 2.500h4.500L12 7.500h4.500" fill="none" stroke="#fff" strokeWidth="1.300" />
      </svg>
    </div>
  );
}

function Taskbar() {
  return (
    <div className="flex h-[58px] bg-[#242424]">
      <div className="ml-[575px] flex items-center">
        {apps.map((a, i) => (
          <div key={i} className={`flex justify-center ${i === 1 ? "w-[56px]" : "w-[55px]"}`}>
            <div className={`relative flex size-[50px] items-center justify-center rounded-[5px] ${a.cell ?? ""}`}>
              {a.icon}
              {a.badge && <Badge>{a.badge}</Badge>}
              {a.mark && (
                <span className="absolute inset-x-0 bottom-px flex justify-center">
                  <span className={`h-1 rounded-full ${a.mark}`} />
                </span>
              )}
            </div>
          </div>
        ))}
      </div>
      <Tray />
    </div>
  );
}

export default function App() {
  return (
    <div className="flex h-[1079px] w-[1919px] flex-col overflow-hidden bg-[#04383e] font-['Open_Sans','DejaVu_Sans',sans-serif]">
      <TabStrip />
      <div className="h-[101px] rounded-t-[10px] border-b border-[#3b8286] bg-[#045b61]">
        <Toolbar />
        <BookmarksBar />
      </div>
      <div className="flex h-[870px]">
        <main className="relative flex w-[1901px] flex-col overflow-hidden">
          <SiteHeader />
          <Hero />
          <SearchSection />
          <CategoriesSection />
          <LoginModal />
        </main>
        <Scrollbar />
      </div>
      <Taskbar />
    </div>
  );
}
